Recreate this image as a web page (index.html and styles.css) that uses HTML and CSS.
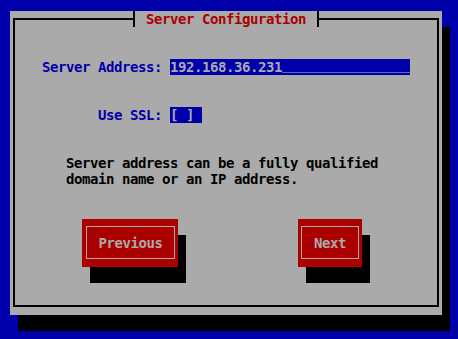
FILE: index.html
```html
<!DOCTYPE html>
<html lang="en">
<head>
  <meta charset="UTF-8" />
  <title>Server Configuration</title>
  <link rel="stylesheet" href="styles.css">
</head>
<body>

  <div class="dialog">
    <div class="frame">
      <!-- Title sits on the top border -->
      <div class="title">Server Configuration</div>

      <!-- Entry fields -->
      <div class="form">
        <label class="label">Server Address:</label>
        <div class="entry">192.168.36.231<span class="fill">________________</span></div>
        <label class="label">Use SSL:</label>
        <div class="check">[ ] </div>
      </div>

      <p class="help">Server address can be a fully qualified<br>domain name or an IP address.</p>

      <!-- Buttons -->
      <div class="buttons">
        <button class="btn"><span class="btn-face">Previous</span></button>
        <button class="btn"><span class="btn-face">Next</span></button>
      </div>
    </div>
  </div>

</body>
</html>
```

FILE: styles.css
```css
/* Terminal screen: blue background, 8x16 character cells */
body {
  margin: 0;
  padding: 11px 0 0 10px;
  height: 339px;
  box-sizing: border-box;
  overflow: hidden;
  background: #0000aa;
  font-family: "DejaVu Sans Mono", monospace;
  font-size: 14px;
  font-weight: bold;
  letter-spacing: -0.43px;
  line-height: 16px;
}

/* Gray window with its drop shadow */
.dialog {
  width: 432px;
  height: 304px;
  box-sizing: border-box;
  padding: 7px 3px 8px 3px;
  background: #aaaaaa;
  box-shadow: 8px 16px 0 #000;
}

.frame {
  height: 100%;
  box-sizing: border-box;
  border: 2px solid #000;
  display: flex;
  flex-direction: column;
  gap: 32px;
}

/* Title: ┤ Server Configuration ├ */
.title {
  align-self: flex-start;
  margin: -9px 0 0 118px;
  height: 16px;
  padding: 0 11px;
  background: #aaaaaa;
  border-left: 2px solid #000;
  border-right: 2px solid #000;
  color: #aa0000;
}

/* Label / field grid */
.form {
  display: grid;
  grid-template-columns: 120px auto;
  column-gap: 8px;
  row-gap: 32px;
  padding-left: 27px;
  justify-items: start;
}

.label {
  justify-self: end;
  color: #0000aa;
  white-space: pre;
}

.entry,
.check {
  height: 16px;
  box-sizing: border-box;
  background: #0000aa;
  color: #aaaaaa;
  white-space: pre;
}

.entry {
  width: 240px;
}

/* underscores sit a little higher in the VGA font */
.entry .fill {
  vertical-align: 3px;
  line-height: 0;
  font-weight: normal;
}

.check {
  width: 32px;
}

/* Help text */
.help {
  margin: 0;
  padding-left: 51px;
  color: #000;
}

/* Buttons */
.buttons {
  display: flex;
  gap: 120px;
  padding-left: 67px;
}

.btn {
  display: flex;
  height: 48px;
  box-sizing: border-box;
  padding: 7px 3px 8px 4px;
  border: 0;
  border-radius: 0;
  background: #aa0000;
  box-shadow: 8px 16px 0 #000;
  font: inherit;
  letter-spacing: inherit;
  line-height: 16px;
  width: 96px;
}

.btn:last-child {
  width: 64px;
  padding-left: 3px;
}

.btn-face {
  flex: 1;
  display: flex;
  align-items: center;
  justify-content: center;
  border: 1px solid #aaaaaa;
  color: #aaaaaa;
}
```
